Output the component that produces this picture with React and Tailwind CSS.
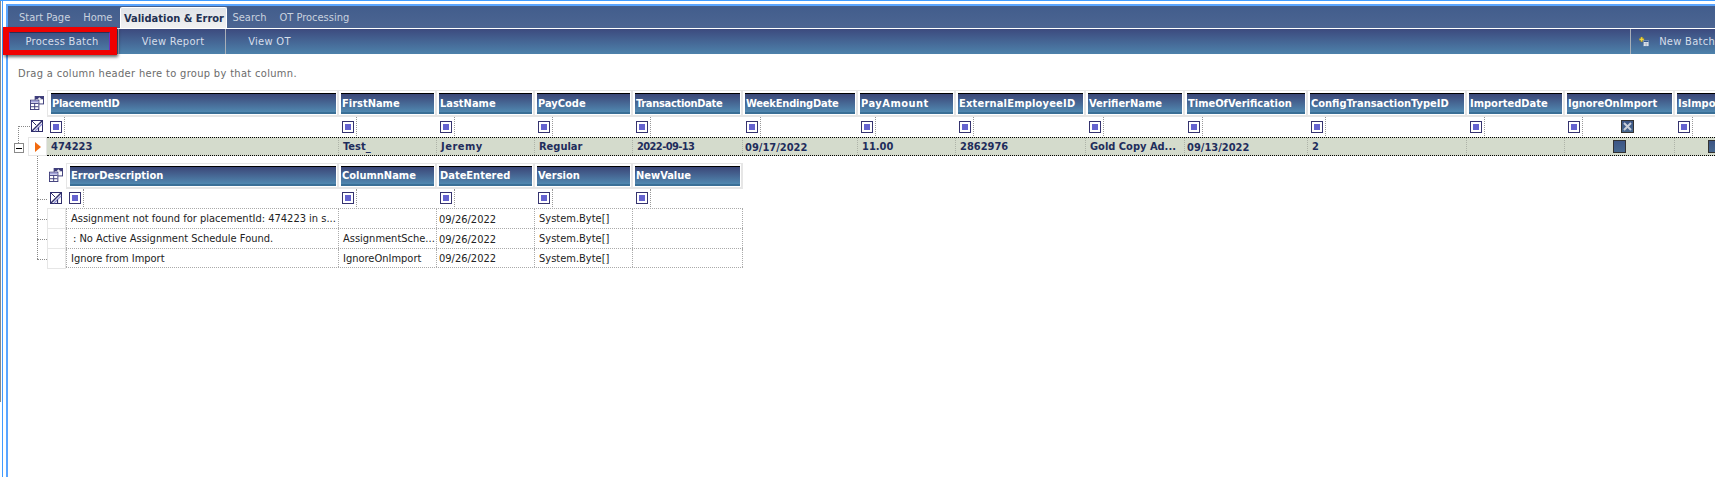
import React from "react";

const parentCols = [
  { name: "PlacementID", w: "w-[292px]", first: true, value: "474223", track: "tracking-[-0.3px]" },
  { name: "FirstName", w: "w-[98px]", value: "Test_" },
  { name: "LastName", w: "w-[98px]", value: "Jeremy", valueTrack: "tracking-[0.5px]" },
  { name: "PayCode", w: "w-[98px]", value: "Regular" },
  { name: "TransactionDate", w: "w-[110px]", value: "2022-09-13", track: "tracking-[-0.3px]", valueTrack: "tracking-[-0.6px]" },
  { name: "WeekEndingDate", w: "w-[115px]", value: "09/17/2022", date: true, track: "tracking-[-0.2px]" },
  { name: "PayAmount", w: "w-[98px]", value: "11.00", track: "tracking-[0.5px]" },
  { name: "ExternalEmployeeID", w: "w-[130px]", value: "2862976", track: "tracking-[0.2px]" },
  { name: "VerifierName", w: "w-[99px]", value: "Gold Copy Ad..." },
  { name: "TimeOfVerification", w: "w-[123px]", value: "09/13/2022", date: true },
  { name: "ConfigTransactionTypeID", w: "w-[159px]", value: "2" },
  { name: "ImportedDate", w: "w-[98px]", value: "" },
  { name: "IgnoreOnImport", w: "w-[110px]", value: "", check: "ml-[44px]", filterX: true },
  { name: "IsImported", w: "w-[98px]", value: "", check: "ml-[29px]" },
];

const childCols = [
  { name: "ErrorDescription", w: "w-[273px]", first: true },
  { name: "ColumnName", w: "w-[98px]" },
  { name: "DateEntered", w: "w-[98px]" },
  { name: "Version", w: "w-[98px]" },
  { name: "NewValue", w: "w-[110px]" },
];

const childRows = [
  ["Assignment not found for placementId: 474223 in s...", "", "09/26/2022", "System.Byte[]", ""],
  ["\u2009: No Active Assignment Schedule Found.", "AssignmentSche...", "09/26/2022", "System.Byte[]", ""],
  ["Ignore from Import", "IgnoreOnImport", "09/26/2022", "System.Byte[]", ""],
];

function ChooserIcon() {
  return (
    <svg width="14" height="14" viewBox="0 0 15 15" className="block">
      <rect x="5.5" y="0.5" width="9" height="8" fill="#fff" stroke="#3b3a78" />
      <rect x="5.5" y="0.5" width="9" height="3" fill="#3b3a78" />
      <path d="M10 5V1.5M8.5 3H12" stroke="#fff" strokeWidth="1" />
      <rect x="0.5" y="4.5" width="9" height="10" fill="#fff" stroke="#3b3a78" />
      <path d="M1 8h8M1 11.5h8M5 8v6" stroke="#3b3a78" strokeWidth="1" />
      <rect x="1" y="5" width="8" height="2" fill="#a6a6dc" />
    </svg>
  );
}

function ClearFilterIcon() {
  return (
    <svg width="12" height="12" viewBox="0 0 12 12" className="block">
      <rect x="0.5" y="0.5" width="11" height="11" fill="#fff" stroke="#2e2d6b" />
      <path d="M1 11 11 1" stroke="#2e2d6b" strokeWidth="1.5" />
      <path d="M4 11l7-7" stroke="#8f8fd6" strokeWidth="1.2" />
      <path d="M7.500 11V7.500" stroke="#2e2d6b" strokeWidth="1.2" />
      <path d="M1 1l4 4" stroke="#2e2d6b" strokeWidth="1" />
    </svg>
  );
}

function FilterBox() {
  return (
    <div className="w-[12px] h-[12px] border border-[#35336f] bg-white flex items-center justify-center shrink-0">
      <div className="w-[6px] h-[6px] bg-[#6563cf]" />
    </div>
  );
}

function NewBatchIcon() {
  return (
    <svg width="17" height="17" viewBox="0 0 17 17" className="block">
      <path d="M3 1h3v2.500h2.500v3H6V9H3V6.500H0.500v-3H3z" fill="#f6d93c" stroke="#8a7a20" strokeWidth="0.6" />
      <rect x="8" y="7" width="8" height="9" fill="#eef1f6" stroke="#a9b6cc" strokeWidth="0.6" />
      <rect x="8" y="7" width="8" height="2.500" fill="#31568f" />
      <path d="M8.500 12.500h7M12 10v6" stroke="#7b8aa6" strokeWidth="0.8" />
    </svg>
  );
}

function CheckCell({ crossed }) {
  return (
    <div className="w-[13px] h-[13px] border border-[#333] bg-gradient-to-b from-[#3c5585] to-[#47688f] flex items-center justify-center">
      {crossed && (
        <svg width="11" height="11" viewBox="0 0 11 11">
          <path d="M2 2l7 7M9 2l-7 7" stroke="#c9cfdb" strokeWidth="2" />
        </svg>
      )}
    </div>
  );
}

function HeaderRow({ cols, height }) {
  return (
    <div className={`flex ${height} border-t border-b-2 border-[#e6e6e6]`}>
      {cols.map((col) => (
        <div
          key={col.name}
          className={`${col.w} shrink-0 h-full pt-[2px] pb-[1px] pr-[1px] border-r-2 border-[#e6e6e6] ${
            col.first ? "pl-[3px] border-l border-l-[#e6e6e6]" : "pl-[2px]"
          }`}
        >
          <div
            className={`h-full border-t border-black border-b-2 border-b-[#3a6f96] bg-gradient-to-b from-[#3b4778] to-[#5088b0] px-[1px] flex items-center text-white font-bold whitespace-nowrap overflow-hidden ${
              col.track || ""
            }`}
          >
            {col.name}
          </div>
        </div>
      ))}
    </div>
  );
}

function FilterRow({ cols, height }) {
  return (
    <div className={`flex ${height}`}>
      {cols.map((col) => (
        <div key={col.name} className={`${col.w} shrink-0 h-full flex items-center pl-[3px] pb-[1px]`}>
          <div className="flex items-center h-full pr-[2px] border-r border-dotted border-[#999]">
            <FilterBox />
          </div>
          {col.filterX && (
            <div className="ml-[38px]">
              <CheckCell crossed />
            </div>
          )}
        </div>
      ))}
    </div>
  );
}

function TreeLines() {
  return (
    <>
      <div className="absolute left-[10px] top-[36px] w-[12px] border-t border-dotted border-[#888]" />
      <div className="absolute left-[10px] top-[36px] h-[17px] border-l border-dotted border-[#888]" />
      <div className="absolute left-[29px] top-[66px] h-[103px] border-l border-dotted border-[#888]" />
      <div className="absolute left-[29px] top-[109px] w-[10px] border-t border-dotted border-[#888]" />
      <div className="absolute left-[29px] top-[129px] w-[10px] border-t border-dotted border-[#888]" />
      <div className="absolute left-[29px] top-[149px] w-[10px] border-t border-dotted border-[#888]" />
      <div className="absolute left-[29px] top-[169px] w-[10px] border-t border-dotted border-[#888]" />
      <div className="absolute left-[6px] top-[53px] w-[10px] h-[10px] border border-[#8a8a8a] bg-white flex items-center justify-center">
        <div className="w-[6px] h-px bg-black" />
      </div>
    </>
  );
}

export default function App() {
  return (
    <div className="relative w-[1715px] h-[477px] overflow-hidden bg-white flex flex-col text-[11px] leading-none text-[#222] font-['DejaVu_Sans_Condensed','Liberation_Sans',sans-serif]">
      <div className="h-px shrink-0 bg-[#3f9bff]" />
      <div className="flex flex-1 min-h-0">
        <div className="w-px h-[401px] bg-[#8a8a8a] shrink-0" />
        <div className="w-px bg-white shrink-0" />
        <div className="w-px bg-[#3f9bff] shrink-0" />
        <div className="w-[3px] shrink-0" />
        <div className="flex-1 min-w-0 mt-[3px] border-t-2 border-l-2 border-[#5aa5ff] flex flex-col">
          {/* tabs */}
          <div className="h-[22px] shrink-0 bg-gradient-to-b from-[#425d8c] to-[#4c6592] flex items-end text-[#c9d2df]">
            <div className="flex items-center h-full pl-[11px] gap-[13px]">
              <span>Start Page</span>
              <span>Home</span>
            </div>
            <div className="ml-[8px] h-[21px] w-[107px] border border-b-0 border-white rounded-t-[2px] bg-gradient-to-b from-[#dfe3e8] to-[#f1f1f1] flex items-center justify-center font-bold text-[#223052] whitespace-nowrap">
              Validation &amp; Error
            </div>
            <div className="flex items-center h-full pl-[5px] gap-[13px]">
              <span>Search</span>
              <span>OT Processing</span>
            </div>
          </div>
          <div className="h-px shrink-0 bg-white" />
          {/* toolbar */}
          <div className="h-[25px] shrink-0 bg-gradient-to-b from-[#3c4a7e] to-[#4d82ab] flex items-center text-[#d6deea] tracking-[0.3px]">
            <div className="w-[111px] h-full flex items-center justify-center pr-[2px] border-r border-[#a9afb8]">Process Batch</div>
            <div className="w-[107px] h-full flex items-center justify-center pl-[2px] border-r border-[#a9afb8]">View Report</div>
            <div className="w-[87px] h-full flex items-center justify-center">View OT</div>
            <div className="ml-auto w-[85px] h-full flex items-center border-l border-[#a9afb8] pl-[8px] gap-[10px] whitespace-nowrap overflow-hidden">
              <NewBatchIcon />
              New Batch
            </div>
          </div>
          {/* group panel */}
          <div className="h-[36px] shrink-0 pl-[10px] pt-[14px] text-[#6b6b6b] tracking-[0.33px]">
            Drag a column header here to group by that column.
          </div>
          {/* parent grid */}
          <div className="relative flex-1 min-h-0 pl-[39px]">
            <TreeLines />
            <div className="absolute left-[22px] top-[6px]">
              <ChooserIcon />
            </div>
            <div className="absolute left-[23px] top-[30px]">
              <ClearFilterIcon />
            </div>
            <HeaderRow cols={parentCols} height="h-[27px]" />
            <FilterRow cols={parentCols} height="h-[20px]" />
            {/* selected row */}
            <div className="relative flex h-[19px] bg-[#d4dbcc] border-y border-dotted border-black font-bold text-[#1f2d5c]">
              <div className="absolute left-[-19px] top-[-1px] w-[19px] h-[19px] border border-[#e6e6e6] bg-white flex items-center justify-center">
                <svg width="6" height="10" viewBox="0 0 6 10">
                  <path d="M0 0l6 5-6 5z" fill="#f26a0f" />
                </svg>
              </div>
              {parentCols.map((col) => (
                <div
                  key={col.name}
                  className={`${col.w} shrink-0 h-full flex items-center border-r border-dotted border-[#aeb3a8] whitespace-nowrap overflow-hidden ${
                    col.date ? "pl-[2px] pt-[2px]" : "pl-[4px]"
                  } ${col.valueTrack || ""}`}
                >
                  {col.check ? (
                    <div className={col.check}>
                      <CheckCell />
                    </div>
                  ) : (
                    col.value
                  )}
                </div>
              ))}
            </div>
            {/* child grid */}
            <div className="mt-[7px] ml-[19px] relative w-fit">
              <div className="absolute left-[-17px] top-[5px]">
                <ChooserIcon />
              </div>
              <div className="absolute left-[-16px] top-[29px]">
                <ClearFilterIcon />
              </div>
              <HeaderRow cols={childCols} height="h-[26px]" />
              <FilterRow cols={childCols} height="h-[19px]" />
              {childRows.map((row, i) => (
                <div key={i} className="relative flex h-[20px] border-t border-dotted border-[#aaa] last:border-b">
                  <div className="absolute left-[-19px] top-[-1px] w-[19px] h-[21px] border border-[#e6e6e6]" />
                  {childCols.map((col, j) => (
                    <div
                      key={col.name}
                      className={`${col.w} shrink-0 h-full flex items-center border-r border-dotted border-[#aaa] whitespace-pre overflow-hidden ${
                        j === 2 ? "pl-[2px] pt-[1px]" : "pl-[4px]"
                      } ${j === 0 ? "border-l" : ""}`}
                    >
                      {row[j]}
                    </div>
                  ))}
                </div>
              ))}
            </div>
          </div>
        </div>
      </div>
      {/* red annotation around Process Batch */}
      <div className="absolute left-[3px] top-[27px] w-[114px] h-[28px] border-[5px] border-l-[6px] border-r-[7px] border-[#f00000] shadow-[1px_2px_3px_rgba(0,0,0,0.6)]">
        <div className="h-full border-x border-x-[#6a35c4] border-t border-t-[#2b2f55]" />
      </div>
    </div>
  );
}
